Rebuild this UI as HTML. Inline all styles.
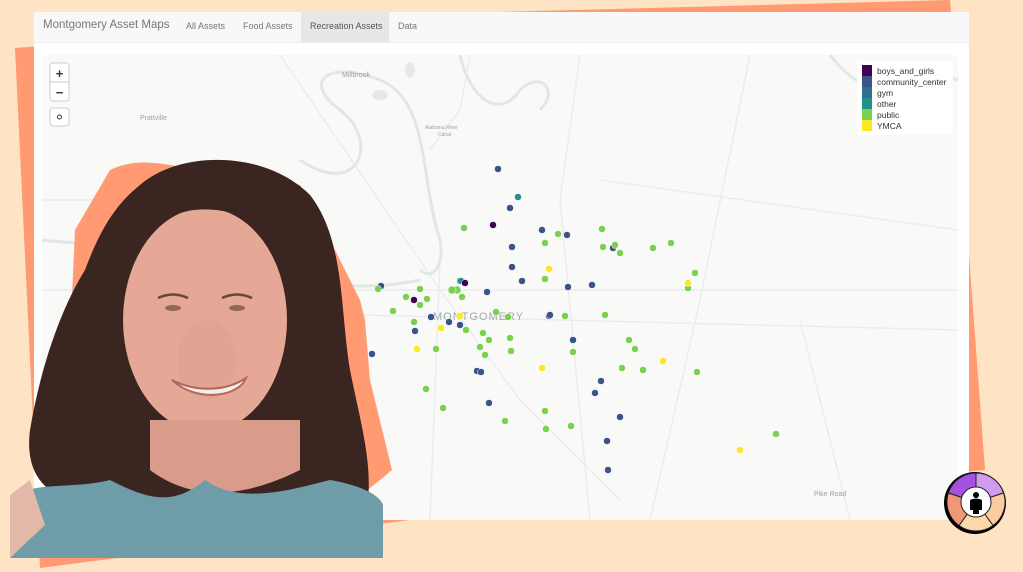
<!DOCTYPE html>
<html><head><meta charset="utf-8"><style>
html,body{margin:0;padding:0;width:1023px;height:572px;overflow:hidden;background:#fee4c4;font-family:"Liberation Sans",sans-serif}
.abs{position:absolute;white-space:nowrap}
</style></head><body>
<svg class="abs" style="left:0;top:0" width="1023" height="572">
<polygon points="15,48 500,12 950,0 985,470 410,520 40,568" fill="#ff9a72"/>
</svg>
<div class="abs" style="left:34px;top:12px;width:935px;height:508px;background:#fff"></div>
<div class="abs" style="left:34px;top:12px;width:935px;height:30px;background:#f8f8f8;border-bottom:1px solid #eee"></div>
<div class="abs" style="left:43px;top:19px;font-size:11.5px;color:#777">Montgomery Asset Maps</div>
<div class="abs" style="left:186px;top:21px;font-size:9px;color:#777">All Assets</div>
<div class="abs" style="left:243px;top:21px;font-size:9px;color:#777">Food Assets</div>
<div class="abs" style="left:301px;top:12px;width:88px;height:30px;background:#e7e7e7"></div>
<div class="abs" style="left:310px;top:21px;font-size:9px;color:#555">Recreation Assets</div>
<div class="abs" style="left:398px;top:21px;font-size:9px;color:#777">Data</div>
<svg class="abs" style="left:0;top:0" width="1023" height="572">
<rect x="42" y="55" width="916" height="465" fill="#f9f9f8"/>
<g fill="none" stroke="#ececec" stroke-width="1.5">
<path d="M280,55 L440,290 L520,400 L620,500"/>
<path d="M42,290 L958,290"/>
<path d="M360,315 L958,330"/>
<path d="M440,260 L430,520"/>
<path d="M430,150 L460,110 L470,55"/>
<path d="M580,55 L560,200 L590,520"/>
<path d="M750,55 L700,300 L650,520"/>
<path d="M800,320 L850,520"/>
<path d="M130,180 L300,300 L360,520"/>
<path d="M42,200 L300,200"/><path d="M600,180 L958,230"/>
</g>
<g fill="none" stroke="#e3e6e8" stroke-width="3">
<path d="M300,160 C360,200 380,140 340,110 C300,80 330,60 380,80 C430,100 420,180 440,240 C445,270 430,280 420,270"/>
<path d="M42,240 C120,250 200,230 260,260 C320,290 370,290 420,280"/>
<path d="M460,55 C470,100 500,120 520,90 C540,70 560,90 540,110"/>
<path d="M830,55 C880,120 900,60 958,80"/>
</g>
<g fill="#e6e8ea"><ellipse cx="410" cy="70" rx="5" ry="8"/><ellipse cx="380" cy="95" rx="8" ry="5"/></g>
<g font-family="Liberation Sans" fill="#99a0ab" font-size="7"><text x="342" y="77">Millbrook</text><text x="140" y="120">Prattville</text><text x="425" y="129" font-size="5">Alabama River</text><text x="438" y="136" font-size="5">Canal</text><text x="814" y="496">Pike Road</text></g>
<text x="433" y="320" font-size="11" fill="#a3a8b0" letter-spacing="1">MONTGOMERY</text>
<g stroke="#fff" stroke-width="0.5">
<g fill="#3b528b">
<circle cx="498" cy="169" r="3.5"/><circle cx="510" cy="208" r="3.5"/><circle cx="542" cy="230" r="3.5"/><circle cx="567" cy="235" r="3.5"/><circle cx="512" cy="247" r="3.5"/><circle cx="512" cy="267" r="3.5"/><circle cx="522" cy="281" r="3.5"/><circle cx="487" cy="292" r="3.5"/><circle cx="460" cy="281" r="3.5"/><circle cx="549" cy="316" r="3.5"/><circle cx="568" cy="287" r="3.5"/><circle cx="592" cy="285" r="3.5"/><circle cx="381" cy="286" r="3.5"/><circle cx="415" cy="331" r="3.5"/><circle cx="449" cy="322" r="3.5"/><circle cx="431" cy="317" r="3.5"/><circle cx="372" cy="354" r="3.5"/><circle cx="477" cy="371" r="3.5"/><circle cx="481" cy="372" r="3.5"/><circle cx="573" cy="340" r="3.5"/><circle cx="550" cy="315" r="3.5"/><circle cx="601" cy="381" r="3.5"/><circle cx="595" cy="393" r="3.5"/><circle cx="489" cy="403" r="3.5"/><circle cx="620" cy="417" r="3.5"/><circle cx="607" cy="441" r="3.5"/><circle cx="608" cy="470" r="3.5"/><circle cx="460" cy="325" r="3.5"/><circle cx="613" cy="248" r="3.5"/>
</g>
<g fill="#21918c"><circle cx="518" cy="197" r="3.5"/><circle cx="461" cy="281" r="3.5"/></g>
<g fill="#7ad151">
<circle cx="464" cy="228" r="3.5"/><circle cx="558" cy="234" r="3.5"/><circle cx="545" cy="243" r="3.5"/><circle cx="602" cy="229" r="3.5"/><circle cx="603" cy="247" r="3.5"/><circle cx="615" cy="245" r="3.5"/><circle cx="620" cy="253" r="3.5"/><circle cx="653" cy="248" r="3.5"/><circle cx="671" cy="243" r="3.5"/><circle cx="695" cy="273" r="3.5"/><circle cx="688" cy="288" r="3.5"/><circle cx="605" cy="315" r="3.5"/><circle cx="545" cy="279" r="3.5"/><circle cx="457" cy="290" r="4"/><circle cx="452" cy="290" r="4"/><circle cx="420" cy="289" r="3.5"/><circle cx="406" cy="297" r="3.5"/><circle cx="393" cy="311" r="3.5"/><circle cx="427" cy="299" r="3.5"/><circle cx="462" cy="297" r="3.5"/><circle cx="496" cy="312" r="3.5"/><circle cx="466" cy="330" r="3.5"/><circle cx="483" cy="333" r="3.5"/><circle cx="508" cy="317" r="3.5"/><circle cx="480" cy="347" r="3.5"/><circle cx="489" cy="340" r="3.5"/><circle cx="510" cy="338" r="3.5"/><circle cx="511" cy="351" r="3.5"/><circle cx="485" cy="355" r="3.5"/><circle cx="436" cy="349" r="3.5"/><circle cx="565" cy="316" r="3.5"/><circle cx="573" cy="352" r="3.5"/><circle cx="629" cy="340" r="3.5"/><circle cx="635" cy="349" r="3.5"/><circle cx="622" cy="368" r="3.5"/><circle cx="643" cy="370" r="3.5"/><circle cx="426" cy="389" r="3.5"/><circle cx="443" cy="408" r="3.5"/><circle cx="505" cy="421" r="3.5"/><circle cx="545" cy="411" r="3.5"/><circle cx="546" cy="429" r="3.5"/><circle cx="571" cy="426" r="3.5"/><circle cx="776" cy="434" r="3.5"/><circle cx="414" cy="322" r="3.5"/><circle cx="420" cy="305" r="3.5"/><circle cx="378" cy="289" r="3.5"/><circle cx="697" cy="372" r="3.5"/>
</g>
<g fill="#440154"><circle cx="493" cy="225" r="3.5"/><circle cx="414" cy="300" r="3.5"/><circle cx="465" cy="283" r="3.5"/></g>
<g fill="#fde725"><circle cx="549" cy="269" r="3.5"/><circle cx="688" cy="283" r="3.5"/><circle cx="417" cy="349" r="3.5"/><circle cx="441" cy="328" r="3.5"/><circle cx="663" cy="361" r="3.5"/><circle cx="542" cy="368" r="3.5"/><circle cx="740" cy="450" r="3.5"/><circle cx="460" cy="316" r="3.5"/></g>
</g>
<g><rect x="50" y="63" width="19" height="38" rx="3" fill="#fff" stroke="#ccc"/><line x1="50" y1="82" x2="69" y2="82" stroke="#ccc"/>
<text x="59.5" y="78" font-size="13" text-anchor="middle" font-weight="bold" fill="#333">+</text>
<text x="59.5" y="97" font-size="13" text-anchor="middle" font-weight="bold" fill="#333">−</text>
<rect x="50" y="108" width="19" height="18" rx="3" fill="#fff" stroke="#ccc"/><circle cx="59.5" cy="117" r="2" fill="none" stroke="#333"/></g>
<g><rect x="857" y="61" width="96" height="74" rx="3" fill="#fff" opacity="0.95"/>
<rect x="862" y="65" width="10" height="11" fill="#440154"/><rect x="862" y="76" width="10" height="11" fill="#3b528b"/><rect x="862" y="87" width="10" height="11" fill="#2c728e"/><rect x="862" y="98" width="10" height="11" fill="#21918c"/><rect x="862" y="109" width="10" height="11" fill="#7ad151"/><rect x="862" y="120" width="10" height="11" fill="#fde725"/>
<g font-size="8.5" fill="#333"><text x="877" y="74">boys_and_girls</text><text x="877" y="85">community_center</text><text x="877" y="96">gym</text><text x="877" y="107">other</text><text x="877" y="118">public</text><text x="877" y="129">YMCA</text></g></g>
<!-- photo -->
<path d="M110,170 C130,160 150,162 170,165 L300,185 L330,240 L360,300 L365,320 L370,380 L392,470 L380,480 L330,520 L110,520 Z" fill="#ff9a72"/>
<path d="M70,340 L75,230 L110,170 L130,200 L100,330Z" fill="#ff9a72"/>
<path d="M140,185 C180,150 265,150 310,195 C345,240 340,310 350,370 C360,420 372,460 368,500 L260,510 L110,505 C40,505 25,470 30,430 C40,370 60,310 85,270 C100,230 115,205 140,185 Z" fill="#3a2520"/>
<ellipse cx="205" cy="320" rx="82" ry="112" fill="#e5a897"/>
<path d="M120,260 C130,190 200,170 260,190 C300,205 300,240 295,260 C270,215 210,200 175,215 C150,225 130,240 120,260 Z" fill="#3a2520"/>
<ellipse cx="207" cy="360" rx="30" ry="40" fill="#df9f8d" opacity="0.5"/>
<path d="M172,380 C195,392 225,392 246,378 C238,398 195,402 172,380Z" fill="#f3efe9" stroke="#b5655d" stroke-width="2"/>
<path d="M158,298 q15,-7 30,0 M222,298 q15,-7 30,0" stroke="#6a4638" stroke-width="2.5" fill="none"/>
<ellipse cx="173" cy="308" rx="8" ry="3" fill="#5a3a30" opacity="0.6"/><ellipse cx="237" cy="308" rx="8" ry="3" fill="#5a3a30" opacity="0.6"/>
<path d="M150,420 L150,470 C190,500 240,500 300,470 L300,420 Z" fill="#d99c8b"/>
<path d="M10,500 C30,480 70,490 110,480 C140,495 170,510 205,480 C240,505 290,490 330,480 C360,485 380,495 383,505 L383,558 L10,558 Z" fill="#6e9ca8"/>
<path d="M10,495 L30,480 L45,525 L10,558 Z" fill="#e2b8a8"/>
<!-- logo -->
<g transform="translate(976,502)">
<circle cx="-1" cy="1" r="31" fill="#000"/>
<path d="M0,0 L0,-29 A29,29 0 0 1 27.6,-9 Z" fill="#cf9cf0" stroke="#222"/>
<path d="M0,0 L27.6,-9 A29,29 0 0 1 17,23.5 Z" fill="#fbcca3" stroke="#222"/>
<path d="M0,0 L17,23.5 A29,29 0 0 1 -17,23.5 Z" fill="#fdd8a8" stroke="#222"/>
<path d="M0,0 L-17,23.5 A29,29 0 0 1 -27.6,-9 Z" fill="#f09876" stroke="#222"/>
<path d="M0,0 L-27.6,-9 A29,29 0 0 1 0,-29 Z" fill="#a550e0" stroke="#222"/>
<circle cx="0" cy="0" r="15" fill="#fff" stroke="#222"/>
<circle cx="0" cy="-7" r="3" fill="#000"/><path d="M-6,8 L-6,-2 Q0,-5 6,-2 L6,8 L3,8 L3,12 L-3,12 L-3,8Z" fill="#000"/>
</g>
</svg>
</body></html>
